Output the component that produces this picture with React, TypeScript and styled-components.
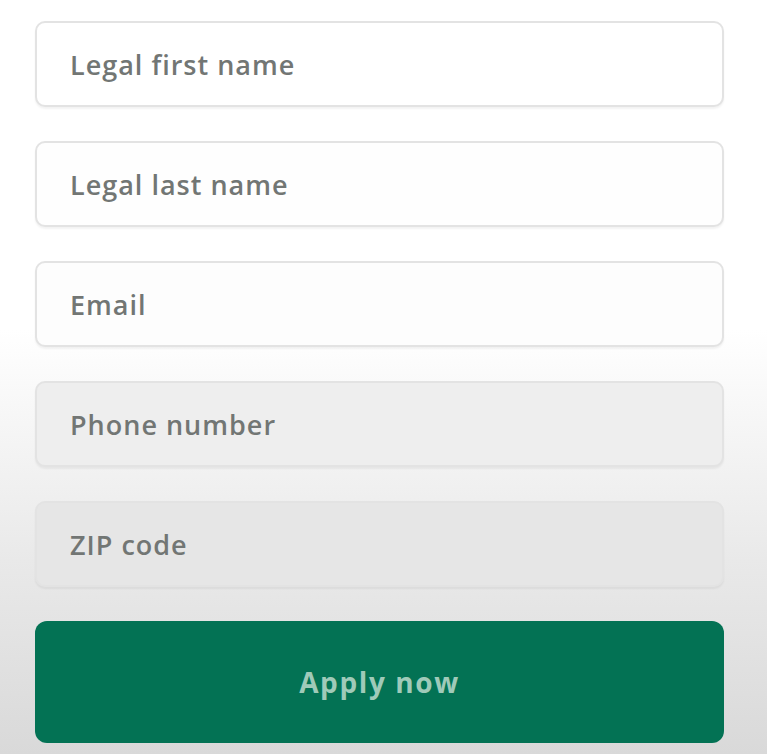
import React, { FC } from 'react';
import styled, { createGlobalStyle } from 'styled-components';

const GlobalStyle = createGlobalStyle`
  html, body {
    margin: 0;
    padding: 0;
  }
  body {
    background: linear-gradient(180deg, #ffffff 0px, #ffffff 330px, #e9e9e9 560px, #d9d9d9 754px);
    min-height: 754px;
    font-family: "Open Sans", "Noto Sans", sans-serif;
  }
`;

const FIELDS = [
  { label: 'Legal first name', tone: '#ffffff' },
  { label: 'Legal last name', tone: '#fefefe' },
  { label: 'Email', tone: '#fdfdfd' },
  { label: 'Phone number', tone: '#eeeeee' },
  { label: 'ZIP code', tone: '#e6e6e6' },
];

const App: FC = () => (
  <>
    <GlobalStyle />
    <Form onSubmit={e => e.preventDefault()}>
      {FIELDS.map(f => (
        <Field key={f.label} tone={f.tone} placeholder={f.label} />
      ))}
      <ApplyButton type="submit">Apply now</ApplyButton>
    </Form>
  </>
);

export default App;

const Form = styled.form`
  display: flex;
  flex-direction: column;
  gap: 34px;
  width: 689px;
  padding: 21px 0 0 35px;
  box-sizing: content-box;
`;

const Field = styled.input<{ tone: string }>`
  height: 86px;
  box-sizing: border-box;
  border: 2px solid #e3e3e3;
  border-radius: 10px;
  background: ${p => p.tone};
  box-shadow: 0 2px 2px rgba(0, 0, 0, 0.05);
  padding: 0 0 0 33px;
  font-family: "Open Sans", "Noto Sans", sans-serif;
  font-size: 27px;
  font-weight: 600;
  letter-spacing: 1px;
  color: #727674;
  outline: none;
  &::placeholder {
    color: #727674;
    opacity: 1;
  }
`;

const ApplyButton = styled.button`
  height: 122px;
  border: none;
  border-radius: 12px;
  background: #037254;
  color: #9fcab9;
  font-family: "Open Sans", "Noto Sans", sans-serif;
  font-size: 28px;
  font-weight: 700;
  letter-spacing: 1.6px;
  cursor: pointer;
`;
